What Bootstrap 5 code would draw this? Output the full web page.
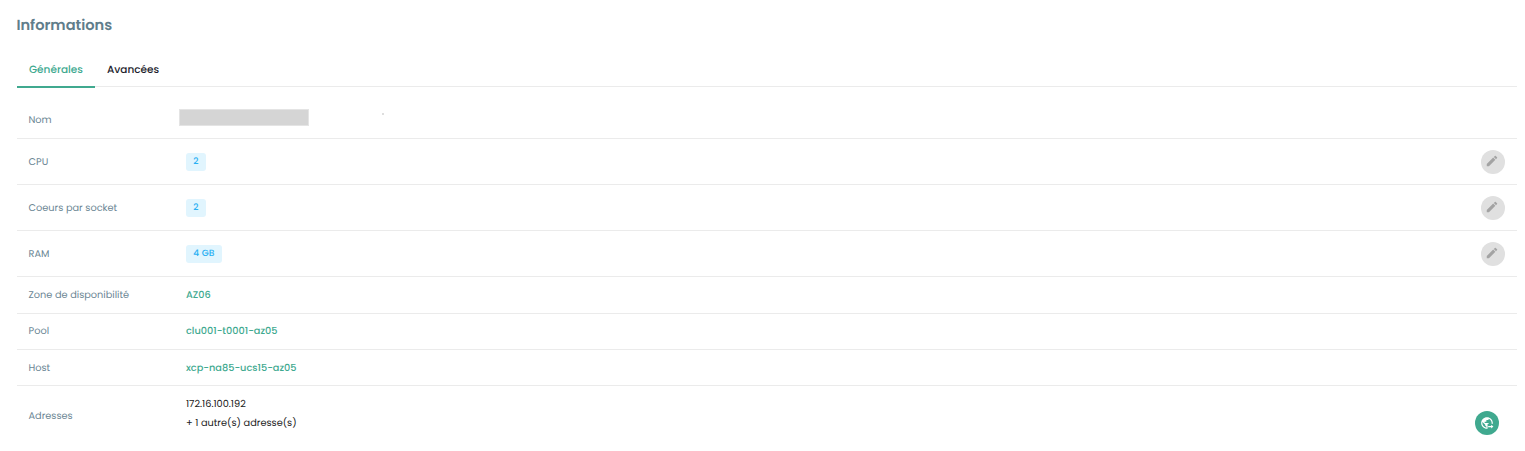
<!DOCTYPE html>
<html lang="fr">
<head>
<meta charset="utf-8">
<meta name="viewport" content="width=device-width, initial-scale=1">
<title>Informations</title>
<link href="https://cdn.jsdelivr.net/npm/bootstrap@5.3.0/dist/css/bootstrap.min.css" rel="stylesheet">
<style>
body{font-family:Poppins,Inter,sans-serif;font-size:9.75px;line-height:15px;background:#fff;color:#212121;overflow:hidden;text-rendering:geometricPrecision}
.panel{padding:0 8px 0 17px}
.panel-title{font-size:14.6px;line-height:20px;font-weight:600;color:#607d8b;padding-top:16px;margin:0 0 16px -.6px;height:36px}
.nav-tabs.info-tabs{height:35px;border-bottom:1px solid #ebebeb}
.info-tabs .nav-link{height:36px;border:0;border-bottom:2px solid transparent;border-radius:0;padding:10px 12px 0;font-size:10.5px;line-height:16px;font-weight:500;color:#1c1c2b;background:none}
.info-tabs .nav-link.active{color:#40a98f;border-bottom-color:#40a98f;width:78px;background:none}
.info-row{border-bottom:1px solid #ebebeb;height:46px;padding:0 12px 0 11.5px}
.info-row.short{height:36px;padding-bottom:1px}
.info-row.pool{padding-bottom:3px}
.info-row.zone{height:37px;padding-bottom:2px}
.info-row.first{height:52px;padding-top:14px}
.info-row.last{height:60px;border:0;padding-right:18px;padding-bottom:1px}
.info-label{width:157.5px;color:#6b8694}
.info-label,.info-link{padding-top:2px}
.info-link{font-weight:500;color:#40a98f;text-decoration:none}
.addresses{gap:4px;margin-top:-3px}
.chip{background:#e1f5fe;color:#29b0f3;font-size:9px;line-height:18px;height:18px;font-weight:500;letter-spacing:.15px;border-radius:3px;padding:0 7.25px}
.redacted{width:130px;height:17px;background:#d5d5d5;border:1px solid #e4e4e4;margin:-4px 0 0 -7px}
.speck{width:2px;height:2px;background:#dedede;margin:-11px 0 0 73px}
.round-btn{width:24px;height:24px;border:0;border-radius:50%;background:#e0e0e0;color:#a3a3a3;padding:0 2px 2px 0}
.round-btn.go{background:#40a98f;color:#fff;padding:0;margin-top:15px}
</style>
</head>
<body>
<main class="panel">
  <h1 class="panel-title">Informations</h1>
  <ul class="nav nav-tabs info-tabs flex-nowrap">
    <li class="nav-item"><a class="nav-link active" href="#">Générales</a></li>
    <li class="nav-item"><a class="nav-link" href="#">Avancées</a></li>
  </ul>
  <div class="info-row first d-flex align-items-center"><span class="info-label">Nom</span><span class="redacted"></span><span class="speck"></span></div>
  <div class="info-row d-flex align-items-center"><span class="info-label">CPU</span><span class="chip">2</span>
    <button class="round-btn ms-auto d-flex align-items-center justify-content-center" aria-label="Modifier CPU"><svg width="14" height="14" viewBox="0 0 24 24" fill="currentColor"><path d="M20.71 7.04c.39-.39.39-1.04 0-1.41l-2.34-2.34c-.37-.39-1.02-.39-1.41 0l-1.84 1.83 3.75 3.75M3 17.25V21h3.75L17.81 9.93l-3.75-3.75z"/></svg></button></div>
  <div class="info-row d-flex align-items-center"><span class="info-label">Coeurs par socket</span><span class="chip">2</span>
    <button class="round-btn ms-auto d-flex align-items-center justify-content-center" aria-label="Modifier les coeurs"><svg width="14" height="14" viewBox="0 0 24 24" fill="currentColor"><path d="M20.71 7.04c.39-.39.39-1.04 0-1.41l-2.34-2.34c-.37-.39-1.02-.39-1.41 0l-1.84 1.83 3.75 3.75M3 17.25V21h3.75L17.81 9.93l-3.75-3.75z"/></svg></button></div>
  <div class="info-row d-flex align-items-center"><span class="info-label">RAM</span><span class="chip">4 GB</span>
    <button class="round-btn ms-auto d-flex align-items-center justify-content-center" aria-label="Modifier la RAM"><svg width="14" height="14" viewBox="0 0 24 24" fill="currentColor"><path d="M20.71 7.04c.39-.39.39-1.04 0-1.41l-2.34-2.34c-.37-.39-1.02-.39-1.41 0l-1.84 1.83 3.75 3.75M3 17.25V21h3.75L17.81 9.93l-3.75-3.75z"/></svg></button></div>
  <div class="info-row zone d-flex align-items-center"><span class="info-label">Zone de disponibilité</span><a class="info-link" href="#">AZ06</a></div>
  <div class="info-row short pool d-flex align-items-center"><span class="info-label">Pool</span><a class="info-link" href="#">clu001-t0001-az05</a></div>
  <div class="info-row short d-flex align-items-center"><span class="info-label">Host</span><a class="info-link" href="#">xcp-na85-ucs15-az05</a></div>
  <div class="info-row last d-flex align-items-center"><span class="info-label">Adresses</span>
    <div class="addresses d-flex flex-column"><span>172.16.100.192</span><span>+ 1 autre(s) adresse(s)</span></div>
    <button class="round-btn go ms-auto d-flex align-items-center justify-content-center" aria-label="Ouvrir une adresse"><svg width="14" height="14" viewBox="0 0 24 24" fill="currentColor" overflow="visible"><path d="M12 2C6.48 2 2 6.48 2 12s4.48 10 10 10 10-4.48 10-10S17.52 2 12 2zm-1 17.93c-3.95-.49-7-3.85-7-7.93 0-.62.08-1.21.21-1.79L9 15v1c0 1.1.9 2 2 2v1.93zm6.9-2.54c-.26-.81-1-1.39-1.9-1.39h-1v-3c0-.55-.45-1-1-1H8v-2h2c.55 0 1-.45 1-1V7h2c1.1 0 2-.9 2-2v-.41c2.93 1.19 5 4.06 5 7.41 0 2.08-.8 3.97-2.1 5.39z"/><path fill="#40a98f" d="M13 13.5h11V24H13z"/><path d="M14 17.2h5.2V15l3.8 3.2-3.8 3.2v-2.2H14z"/></svg></button></div>
</main>
<script src="https://cdn.jsdelivr.net/npm/bootstrap@5.3.0/dist/js/bootstrap.bundle.min.js"></script>
</body>
</html>
